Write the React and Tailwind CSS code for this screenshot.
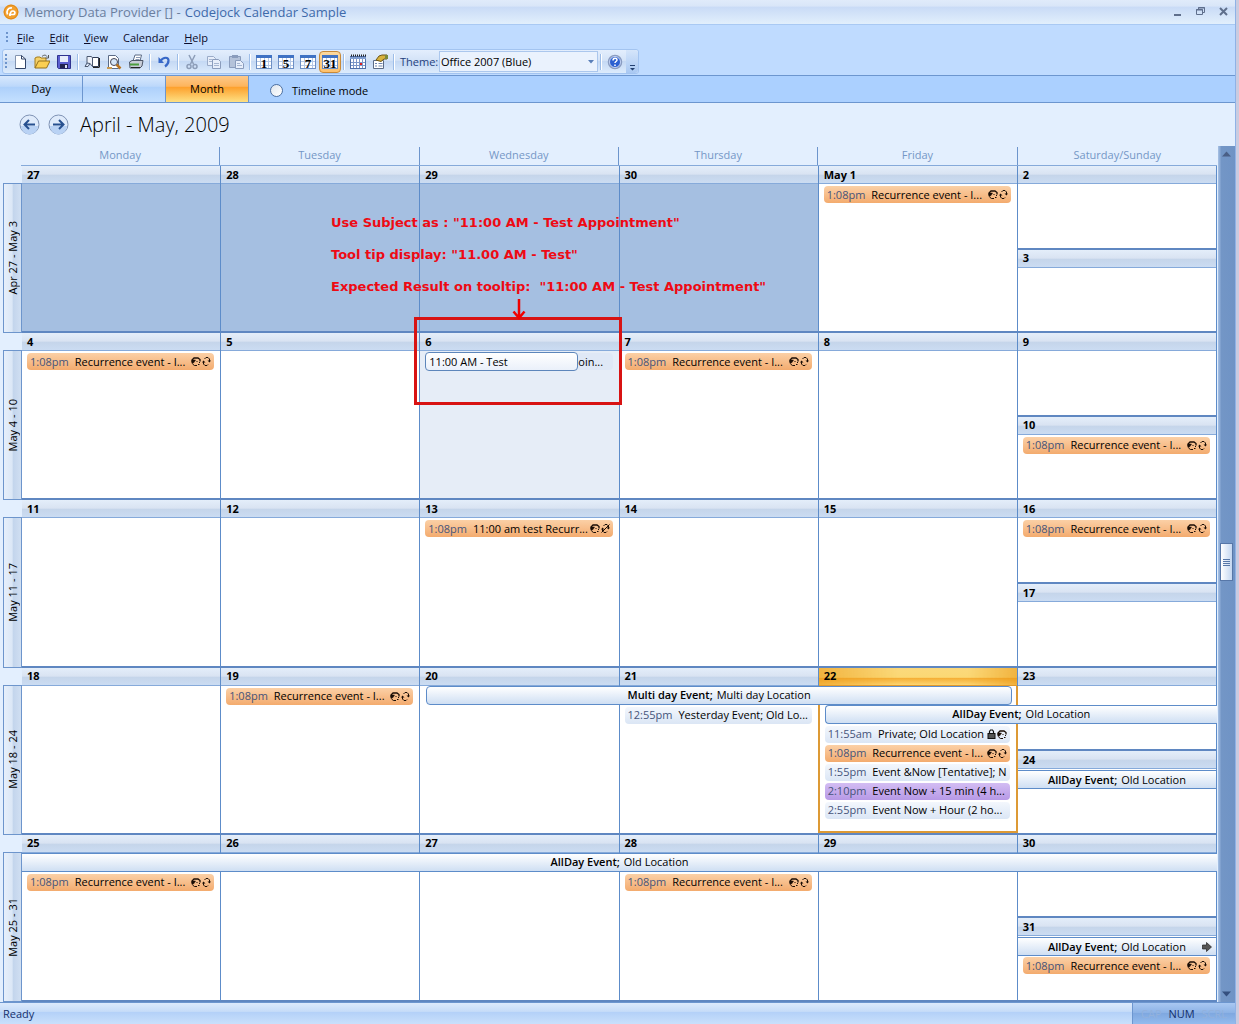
const recurrence = { time: '1:08pm', text: 'Recurrence event - I...', tone: 'orange', icons: ['bell', 'loop'] }

const weeks = [
  {
    label: 'Apr 27 - May 3',
    days: [
      { date: '27', tone: 'past' },
      { date: '28', tone: 'past' },
      { date: '29', tone: 'past' },
      { date: '30', tone: 'past' },
      { date: 'May 1', events: [recurrence] },
    ],
    weekend: [{ date: '2' }, { date: '3' }],
  },
  {
    label: 'May 4 - 10',
    days: [
      { date: '4', events: [recurrence] },
      { date: '5' },
      { date: '6', tone: 'selected', tooltip: true },
      { date: '7', events: [recurrence] },
      { date: '8' },
    ],
    weekend: [{ date: '9' }, { date: '10', events: [recurrence] }],
  },
  {
    label: 'May 11 - 17',
    days: [
      { date: '11' },
      { date: '12' },
      { date: '13', events: [{ time: '1:08pm', text: '11:00 am test Recurr...', tone: 'orange', icons: ['bell', 'loopOff'] }] },
      { date: '14' },
      { date: '15' },
    ],
    weekend: [{ date: '16', events: [recurrence] }, { date: '17' }],
  },
  {
    label: 'May 18 - 24',
    days: [
      { date: '18' },
      { date: '19', events: [recurrence] },
      { date: '20' },
      { date: '21', skip: 1, events: [{ time: '12:55pm', text: 'Yesterday Event; Old Lo...' }] },
      {
        date: '22',
        tone: 'today',
        skip: 2,
        events: [
          { time: '11:55am', text: 'Private; Old Location', icons: ['lock', 'bell'] },
          recurrence,
          { time: '1:55pm', text: 'Event &Now [Tentative]; N' },
          { time: '2:10pm', text: 'Event Now + 15 min (4 h...', tone: 'purple' },
          { time: '2:55pm', text: 'Event Now + Hour (2 ho...' },
        ],
      },
    ],
    weekend: [{ date: '23' }, { date: '24', allDay: true }],
    spans: [
      { title: 'Multi day Event;', place: 'Multi day Location', className: 'col-start-3 col-span-3 ml-[6px] mr-[6px] border rounded' },
      { title: 'AllDay Event;', place: 'Old Location', className: 'col-start-5 col-span-2 ml-[6px] border-y border-l rounded-l' },
    ],
  },
  {
    label: 'May 25 - 31',
    days: [
      { date: '25', skip: 1, events: [recurrence] },
      { date: '26' },
      { date: '27' },
      { date: '28', skip: 1, events: [recurrence] },
      { date: '29' },
    ],
    weekend: [{ date: '30' }, { date: '31', allDay: true, more: true, events: [recurrence] }],
    spans: [{ title: 'AllDay Event;', place: 'Old Location', className: 'col-span-6 border-y' }],
  },
]

const Bell = () => (
  <svg className="w-[10px] h-[9px] shrink-0" viewBox="0 0 10 9" fill="none" stroke="#1a0d05">
    <path d="M1 5.500V3l2-2h4l2 1.500v2" strokeWidth="1.300" />
    <path d="M1 3h3.500L3 5.500 1 6.500z" fill="#1a0d05" strokeWidth="0.500" />
    <path d="M1.500 7 3.500 8.500H6M5.500 4.500h1M8 5.500h1M7 7.500h1.500" />
  </svg>
)

const Loop = ({ off }) => (
  <svg className="w-[9px] h-[9px] shrink-0" viewBox="0 0 9 9" fill="none" stroke="#1a0d05">
    <path d="M2.500 2 4 0.500h2L7.500 2v2M6 7.500 5 8.500H3L1.500 7V5" />
    <path d="M5.500 3.500H9L7.500 5.500zM0 5.500h3.500L1.500 3.500z" fill="#1a0d05" stroke="none" />
    {off && <path d="M0.500 8.500 8.500 0.500" />}
  </svg>
)

const Lock = () => (
  <svg className="w-[9px] h-[10px] shrink-0" viewBox="0 0 9 10">
    <path d="M2.500 5V2.500L3.500 1h2l1 1.500V5" fill="none" stroke="#111" strokeWidth="1.200" />
    <rect x="1" y="4.500" width="7" height="5" fill="#555" stroke="#111" />
  </svg>
)

const eventIcons = {
  bell: <Bell key="bell" />,
  loop: <Loop key="loop" />,
  loopOff: <Loop key="loopOff" off />,
  lock: <Lock key="lock" />,
}

const eventTones = {
  orange: 'bg-linear-to-b from-[#fbd0a6] to-[#f3ab6e]',
  purple: 'bg-linear-to-b from-[#d3bdf3] to-[#b799e6]',
  plain: 'bg-linear-to-b from-[#f3f7fd] to-[#dbe6f5]',
}

const EventRow = ({ time, text, tone = 'plain', icons = [] }) => (
  <div className="h-[19px] pt-px pb-px pl-[5px] pr-[6px]">
    <div className={`h-[17px] flex items-center rounded pl-[3px] pr-[3px] whitespace-nowrap overflow-hidden ${eventTones[tone]}`}>
      <span className="text-[#46547a] mr-[6px]">{time}</span>
      <span>{text}</span>
      <span className="ml-auto flex items-center gap-px">{icons.map((name) => eventIcons[name])}</span>
    </div>
  </div>
)

const AllDayBar = ({ title, place, more, className }) => (
  <div className={`h-[19px] flex items-center justify-center gap-1 border-[#5d8cc9] bg-linear-to-b from-white to-[#cfdff3] ${className}`}>
    <b className="font-semibold">{title}</b>
    <span>{place}</span>
    {more && (
      <svg className="absolute right-1 w-[10px] h-[10px]" viewBox="0 0 10 10">
        <path d="M0.500 3h4V0.500L9.500 5l-5 4.500V7h-4z" fill="#555" stroke="#222" strokeWidth="0.700" />
      </svg>
    )}
  </div>
)

const cellTones = {
  past: 'bg-[#a5bfe1]',
  selected: 'bg-[#e6edf7]',
  today: 'bg-white border-x-2 border-b-2 border-[#dd9a35] -ml-px -mr-px',
  plain: 'bg-white',
}

const Day = ({ date, tone = 'plain', skip = 0, events = [], allDay, more, tooltip }) => (
  <div className="relative flex-1 min-h-0 flex flex-col border-r border-r-[#5d8cc9] border-b-2 border-b-[#5f87c1]">
    <div
      className={`h-[18px] shrink-0 flex items-center pl-[5px] font-bold border-b ${
        tone === 'today'
          ? 'border-[#e39a2b] bg-[linear-gradient(90deg,#e9930e88,transparent_40%,transparent_75%,#e9930e88),linear-gradient(#fbd97c,#fbd874_55%,#f5ae35_60%,#fdd672)]'
          : 'border-[#86aada] bg-[linear-gradient(#e4eefa,#d9e3f2_48%,#c5d5ea_54%,#cbdcf2)]'
      }`}
    >
      {date}
    </div>
    <div className={`flex-1 min-h-0 pt-px ${cellTones[tone]}`}>
      {Array.from({ length: skip }, (_, i) => (
        <div key={i} className="h-[19px]" />
      ))}
      {allDay && (
        <div className="relative">
          <AllDayBar title="AllDay Event;" place="Old Location" more={more} className="border-y" />
        </div>
      )}
      {events.map((event) => (
        <EventRow key={event.time} {...event} />
      ))}
      {tooltip && (
        <div className="h-[19px] flex items-center pl-[5px] pr-[6px]">
          <span role="tooltip" className="w-[153px] h-[19px] flex items-center pl-[3px] rounded border border-[#5d86bb] bg-linear-to-b from-white to-[#eaf0fa]">
            11:00 AM - Test
          </span>
          <span className="flex-1 h-[17px] flex items-center rounded-r bg-[#dfe8f6]">oin...</span>
        </div>
      )}
    </div>
    {tooltip && (
      <div className="absolute z-20 -left-[6px] -right-[3px] -top-[16px] h-[88px] border-3 border-[#d81313]">
        <svg className="absolute left-1/2 -ml-[7px] -top-[22px] w-[16px] h-[22px]" viewBox="0 0 16 22" fill="none" stroke="#f00000" strokeWidth="2.500">
          <path d="M8 1v19M2.500 13.500 8 20l5.500-6.500" />
        </svg>
      </div>
    )}
  </div>
)

const Week = ({ label, days, weekend, spans = [], children }) => (
  <div className="flex flex-1 min-h-0">
    <div className="w-[19px] shrink-0 pt-[17px]">
      <div className="h-full flex items-center justify-center border border-[#6d95cc] bg-[linear-gradient(90deg,#e6effb,#dbe7f6_48%,#c3d5ec_54%,#d0dff2)]">
        <span className="rotate-180 whitespace-nowrap [writing-mode:vertical-rl]">{label}</span>
      </div>
    </div>
    <div className="relative flex-1 grid grid-cols-6">
      {days.map((day) => (
        <div key={day.date} className="flex flex-col min-w-0">
          <Day {...day} />
        </div>
      ))}
      <div className="flex flex-col min-w-0">
        {weekend.map((day) => (
          <Day key={day.date} {...day} />
        ))}
      </div>
      {spans.length > 0 && (
        <div className="absolute inset-x-0 top-[18px] grid grid-cols-6">
          {spans.map((span) => (
            <AllDayBar key={span.title} {...span} />
          ))}
        </div>
      )}
      {children}
    </div>
  </div>
)

const Sep = () => (
  <span className="w-[6px] flex justify-center">
    <span className="w-[2px] h-[16px] bg-[#9dbde8] border-r border-white" />
  </span>
)

const ToolButton = ({ label, active, children }) => (
  <button
    aria-label={label}
    className={`w-[22px] h-[22px] flex items-center justify-center ${
      active ? 'border border-[#c98a38] rounded-sm bg-linear-to-b from-[#fbd9a0] to-[#fdc06b]' : ''
    }`}
  >
    <svg className="w-[16px] h-[16px] shrink-0" viewBox="0 0 16 16" fill="none">
      {children}
    </svg>
  </button>
)

const CalendarGlyph = ({ text }) => (
  <>
    <rect x="0.500" y="1.500" width="15" height="13" fill="#fff" stroke="#6d8fc4" />
    <path d="M0 1h16v3H0z" fill="#3f72c4" />
    <path d="M1 7.500h14M1 11.500h14M4.500 4v10M8.500 4v10M12.500 4v10" stroke="#b5c8e6" />
    <text x="8" y="14" textAnchor="middle" fontSize="13" fontWeight="700" fontFamily="Liberation Serif, serif" fill="#000">
      {text}
    </text>
  </>
)

const Toolbar = () => (
  <div className="w-fit ml-[2px] h-[25px] flex items-center rounded-[3px] border border-[#a3c4f0] bg-[linear-gradient(#e3eefd,#d4e3f7_45%,#c5d9f4_50%,#dcebfc)]">
    <span className="w-[6px] flex justify-center">
      <svg className="w-[2px] h-[15px]" viewBox="0 0 2 15">
        <path d="M1 0v15" stroke="#6d94cc" strokeWidth="2" strokeDasharray="2 2" />
      </svg>
    </span>
    <ToolButton label="New">
      <path d="M3 1h7l4 4v10H3z" fill="#fff" />
      <path d="M3.500 15V1.500h6" stroke="#8394b0" />
      <path d="M9.500 1.500 13.500 5v9.500h-10M9.500 1.500V5h4" stroke="#2f4368" />
    </ToolButton>
    <ToolButton label="Open">
      <path d="M1 14V4l2-1h3l1 1h5v3" fill="#f5d169" stroke="#a47c1c" />
      <path d="M1 14 4.500 7H16l-3.500 7z" fill="#fbcf52" stroke="#94701c" />
      <path d="M8 2.500c2-2 4-1.500 5 0M14.500 1v3h-3" stroke="#555" />
    </ToolButton>
    <ToolButton label="Save">
      <path d="M1.500 1.500h13v13h-12l-1-1z" fill="#5b5fd0" stroke="#30338f" />
      <path d="M4 2h8v6H4z" fill="#e8edfb" />
      <path d="M4 10h8v4.500H4z" fill="#20224f" />
      <path d="M9 11h2v3H9z" fill="#dfe3f5" />
    </ToolButton>
    <Sep />
    <ToolButton label="Address book">
      <path d="M8.500 3.500h6v9h-6z" fill="#fff" stroke="#333f57" />
      <path d="M1 12.500 3 9V2.500h4l1.500 1v9L6 9.500 3 9M1 12.500h3L6 9.500" fill="#eef2fa" stroke="#4b5870" />
      <path d="M9 13.500h6.500M15.500 4v9" stroke="#222" />
    </ToolButton>
    <ToolButton label="Print preview">
      <path d="M2.500 1.500h7l3 3v10h-10z" fill="#fff" stroke="#5b6b86" />
      <circle cx="8" cy="8" r="3.500" fill="#d5e6f8" stroke="#445" />
      <path d="m10.500 10.500 4 4" stroke="#b87320" strokeWidth="2.500" />
      <path d="M1 14h5" stroke="#c99a52" strokeWidth="2" />
    </ToolButton>
    <ToolButton label="Print">
      <path d="M5 7 7 1h6.500L12 7z" fill="#fff" stroke="#5b6b86" />
      <path d="M1.500 8 4 6.500h11L14 12l-2 2H2z" fill="#c8cdd8" stroke="#4e5768" />
      <path d="M2 10.500h9" stroke="#4b9d3e" strokeWidth="2" />
      <path d="M3 13.500h9" stroke="#222" />
      <path d="M8 3.500h4M7.500 5.500h4" stroke="#8998b3" />
    </ToolButton>
    <Sep />
    <ToolButton label="Undo">
      <path d="M4.500 7c3-4.500 8-4 8-.500 0 3-2 5-3.500 6" stroke="#3768c8" strokeWidth="2.200" />
      <path d="M2.500 3v6H8z" fill="#3768c8" />
    </ToolButton>
    <Sep />
    <ToolButton label="Cut">
      <path d="M5 1l4.500 9M11 1 6.500 10" stroke="#8d9db8" strokeWidth="1.500" />
      <circle cx="5" cy="12.500" r="2" stroke="#8d9db8" strokeWidth="1.500" />
      <circle cx="11" cy="12.500" r="2" stroke="#8d9db8" strokeWidth="1.500" />
    </ToolButton>
    <ToolButton label="Copy">
      <path d="M1.500 2.500h6l2 2v7h-8z" fill="#e7eefa" stroke="#9aabc8" />
      <path d="M6.500 5.500h6l2 2v7h-8z" fill="#e7eefa" stroke="#8a9cbc" />
      <path d="M3 5.500h3M3 7.500h3M8 9.500h5M8 11.500h5" stroke="#a5b5d0" />
    </ToolButton>
    <ToolButton label="Paste">
      <path d="M1.500 2.500h11v11h-11z" fill="#b4c2d9" stroke="#8a9cbc" />
      <path d="M4 1h6v3H4z" fill="#8a9cbc" />
      <path d="M7.500 6.500h5l3 3v5h-8z" fill="#e7eefa" stroke="#8a9cbc" />
      <path d="M9 9.500h3M9 11.500h5" stroke="#a5b5d0" />
    </ToolButton>
    <Sep />
    <ToolButton label="Day view"><CalendarGlyph text="1" /></ToolButton>
    <ToolButton label="Work week view"><CalendarGlyph text="5" /></ToolButton>
    <ToolButton label="Week view"><CalendarGlyph text="7" /></ToolButton>
    <ToolButton label="Month view" active><CalendarGlyph text="31" /></ToolButton>
    <Sep />
    <ToolButton label="Calendar grid">
      <rect x="0.500" y="2.500" width="15" height="12" fill="#fff" stroke="#4f6fa8" />
      <path d="M0 3h16v2H0z" fill="#7f9dd0" />
      <path d="M1 1.500h15" stroke="#222" strokeWidth="2" strokeDasharray="1 1" />
      <path d="M1 8.500h14M1 11.500h14M3.500 5v9M6.500 5v9M9.500 5v9M12.500 5v9" stroke="#7d98c8" />
      <path d="M10 9h2v2h-2z" fill="#e02020" />
    </ToolButton>
    <ToolButton label="Properties">
      <path d="M1.500 6.500h10v8h-10z" fill="#fff" stroke="#5b6b86" />
      <path d="M3 9.500h2M6.500 9.500h4M3 12h2M6.500 12h4" stroke="#6d83ab" />
      <path d="M4 6 7 2l3-1h5v4h-3L9 7.500z" fill="#d8b23c" stroke="#6f5718" />
      <path d="M13 1h3v4h-3z" fill="#7c8a3c" />
    </ToolButton>
    <Sep />
    <label htmlFor="theme" className="w-[42px] pl-[3px] text-[#1f3f7d]">Theme:</label>
    <span className="relative">
      <select id="theme" className="block w-[159px] h-[21px] pl-px appearance-none border border-[#abc7ed] bg-[#eaf2fd]">
        <option>Office 2007 (Blue)</option>
      </select>
      <svg className="absolute right-1 top-[9px] w-[6px] h-[4px] pointer-events-none" viewBox="0 0 6 4">
        <path d="M0 0h6L3 3.500z" fill="#5a7fb8" />
      </svg>
    </span>
    <Sep />
    <ToolButton label="Help">
      <circle cx="8" cy="8" r="6.500" fill="#2b5fd0" stroke="#8a9cc0" strokeWidth="1.500" />
      <circle cx="8" cy="8" r="5.500" stroke="#e9effc" strokeWidth="0.800" />
      <path d="M6 6.500c0-3 4-3 4-.500 0 1.500-2 1.500-2 3M8 10.500V12" stroke="#fff" strokeWidth="1.500" />
    </ToolButton>
    <button aria-label="Toolbar options" className="w-[12px] h-full flex items-end justify-center pb-[2px] rounded-r-[3px] bg-linear-to-b from-[#d5e5fa] to-[#a9c8f2]">
      <svg className="w-[7px] h-[6px]" viewBox="0 0 7 6">
        <path d="M1 0h5v1H1zM1 3h5L3.500 5.500z" fill="#24406f" />
      </svg>
    </button>
  </div>
)

const TitleBar = () => (
  <header className="h-[25px] flex items-center pl-[3px] pr-[4px] border-b border-[#a9c9f3] text-[13px] bg-[linear-gradient(#e0ebfa,#d9e6f8_25%,#c9dbf6_30%,#e2effc)]">
    <svg className="w-[16px] h-[16px]" viewBox="0 0 16 16" fill="none">
      <circle cx="8" cy="8" r="7.500" fill="#f2a02d" />
      <circle cx="8" cy="8" r="6.800" stroke="#df8a1c" />
      <path d="M4.500 10.500C3 7 5 3.500 9 4M7 12c0-2 .5-5 3-5s2.500 3.500 0 3.500H6" stroke="#fff" strokeWidth="1.700" />
    </svg>
    <h1 className="ml-[5px] flex gap-1">
      <span className="text-[#6b7f9f]">Memory Data Provider [] -</span>
      <span className="text-[#3e6aaa]">Codejock Calendar Sample</span>
    </h1>
    <div className="ml-auto flex gap-[9px]">
      <button aria-label="Minimize">
        <svg className="w-[14px] h-[12px]" viewBox="0 0 14 12"><path d="M3 8h7v2H3z" fill="#5f6f8c" /></svg>
      </button>
      <button aria-label="Restore">
        <svg className="w-[14px] h-[12px]" viewBox="0 0 14 12" fill="none" stroke="#5f6f8c">
          <path d="M2.500 3.500h6v5h-6zM4.500 3V1.500h6v5H9M2 4h7M4 2h7" />
        </svg>
      </button>
      <button aria-label="Close">
        <svg className="w-[14px] h-[12px]" viewBox="0 0 14 12"><path d="m3 2 7 7M10 2 3 9" stroke="#5f6f8c" strokeWidth="2" /></svg>
      </button>
    </div>
  </header>
)

const MenuBar = () => (
  <nav className="h-[24px] flex items-center pl-[6px] pt-px text-[#0b0b2a]">
    <svg className="w-[2px] h-[11px] mr-[9px]" viewBox="0 0 2 11">
      <path d="M1 0v11" stroke="#6d94cc" strokeWidth="2" strokeDasharray="2 2" />
    </svg>
    <div className="flex gap-[15px]">
      <button><u>F</u>ile</button>
      <button><u>E</u>dit</button>
      <button><u>V</u>iew</button>
      <button>Calendar</button>
      <button><u>H</u>elp</button>
    </div>
  </nav>
)

const ViewTabs = () => (
  <div className="h-[28px] flex items-stretch border-y border-[#6c96cf] bg-[#abd0ff]">
    {['Day', 'Week', 'Month'].map((name) => (
      <button
        key={name}
        className={`w-[83px] border-r border-[#6c96cf] ${
          name === 'Month'
            ? 'bg-[linear-gradient(#fdc98a,#fdb45c_40%,#fd9f2b_42%,#fee083)]'
            : 'bg-[linear-gradient(#d8e8fd,#bcd8fb_40%,#add0fb_42%,#c4e0ff)]'
        }`}
      >
        {name}
      </button>
    ))}
    <label className="flex items-center gap-[9px] ml-[21px] pt-[3px]">
      <input type="radio" className="appearance-none w-[13px] h-[13px] rounded-full border border-[#4d6f9f] bg-linear-to-br from-[#dfe6ee] to-white" />
      Timeline mode
    </label>
  </div>
)

const ArrowButton = ({ label, d }) => (
  <button aria-label={label}>
    <svg className="w-[21px] h-[21px]" viewBox="0 0 21 21" fill="none">
      <circle cx="10.500" cy="10.500" r="9.500" fill="#dfebfb" stroke="#7f93b5" />
      <path d="M2 12a8.500 8.500 0 0 0 17 0z" fill="#b9d2f4" />
      <path d={d} stroke="#27508f" strokeWidth="2" />
    </svg>
  </button>
)

const ScrollBar = () => (
  <div className="w-[17px] shrink-0 flex flex-col items-center justify-between py-[5px] bg-linear-to-r from-[#a9c3e6] via-[#7396c6] via-20% to-[#6f93c5]">
    <svg className="w-[9px] h-[6px]" viewBox="0 0 9 6"><path d="M0 5.500h9L4.500 0.500z" fill="#4a5f86" /></svg>
    <div className="w-[13px] h-[38px] mt-[-24px] flex flex-col items-center justify-center gap-px border border-[#5777a8] bg-linear-to-r from-white to-[#c3d6f0]">
      {[0, 1, 2, 3].map((i) => (
        <span key={i} className="w-[7px] h-px bg-[#5777a8]" />
      ))}
    </div>
    <svg className="w-[9px] h-[6px]" viewBox="0 0 9 6"><path d="M0 0.500h9L4.500 5.500z" fill="#35507f" /></svg>
  </div>
)

const App = () => (
  <div className="h-screen flex flex-col pr-[3px] bg-[#c9cbe0] font-['Open_Sans',sans-serif] text-[11px] leading-[16px] text-black">
    <div className="flex-1 min-h-0 flex flex-col border-r border-[#8fb2e6] bg-[#e3effe]">
      <TitleBar />
      <div className="bg-[#bfdbff] pb-px">
        <MenuBar />
        <Toolbar />
      </div>
      <ViewTabs />
      <main className="flex-1 min-h-0 flex flex-col">
        <div className="h-[43px] flex items-center gap-[8px] pl-[19px]">
          <ArrowButton label="Previous" d="M16 10.500H5.500M10 6l-4.500 4.500L10 15" />
          <ArrowButton label="Next" d="M5 10.500h10.500M11 6l4.500 4.500L11 15" />
          <h2 className="ml-[3px] text-[20px] leading-[24px] font-light">April - May, 2009</h2>
        </div>
        <div className="flex-1 min-h-0 flex pl-[3px]">
          <div className="flex-1 flex flex-col pr-px">
            <div className="h-[20px] ml-[18px] shrink-0 grid grid-cols-6 text-center text-[#7597c6] border-b border-[#86aada]">
              {['Monday', 'Tuesday', 'Wednesday', 'Thursday', 'Friday', 'Saturday/Sunday'].map((name) => (
                <div key={name} className="mt-px border-r border-[#6d95cc] last:border-r-0">{name}</div>
              ))}
            </div>
            {weeks.map((week, i) => (
              <Week key={week.label} {...week}>
                {i === 0 && (
                  <div className="absolute left-[309px] top-[41px] z-20 font-['DejaVu_Sans',sans-serif] text-[13px] leading-[32px] font-bold text-[#ee0a14] whitespace-pre">
                    <p>Use Subject as : "11:00 AM - Test Appointment"</p>
                    <p>Tool tip display: "11.00 AM - Test"</p>
                    <p>Expected Result on tooltip:  "11:00 AM - Test Appointment"</p>
                  </div>
                )}
              </Week>
            ))}
          </div>
          <ScrollBar />
        </div>
      </main>
      <footer className="h-[22px] shrink-0 flex border-t border-[#6c96cf] text-[#15306b] bg-[linear-gradient(#dceafc,#c6dcf8_40%,#b4d1f8_45%,#c9e0fb)]">
        <p className="pl-[3px] pt-[3px]">Ready</p>
        <p className="ml-auto w-[103px] pt-[3px] text-center border-l border-[#6c96cf] bg-[linear-gradient(#a9c8f2,#8db3e6_45%,#7fa8e0_50%,#93bbee)]">
          <span className="text-[#92b1dc]">CAP </span>
          <span className="mx-1">NUM</span>
          <span className="text-[#92b1dc]"> SCRL</span>
        </p>
      </footer>
    </div>
  </div>
)

export default App
